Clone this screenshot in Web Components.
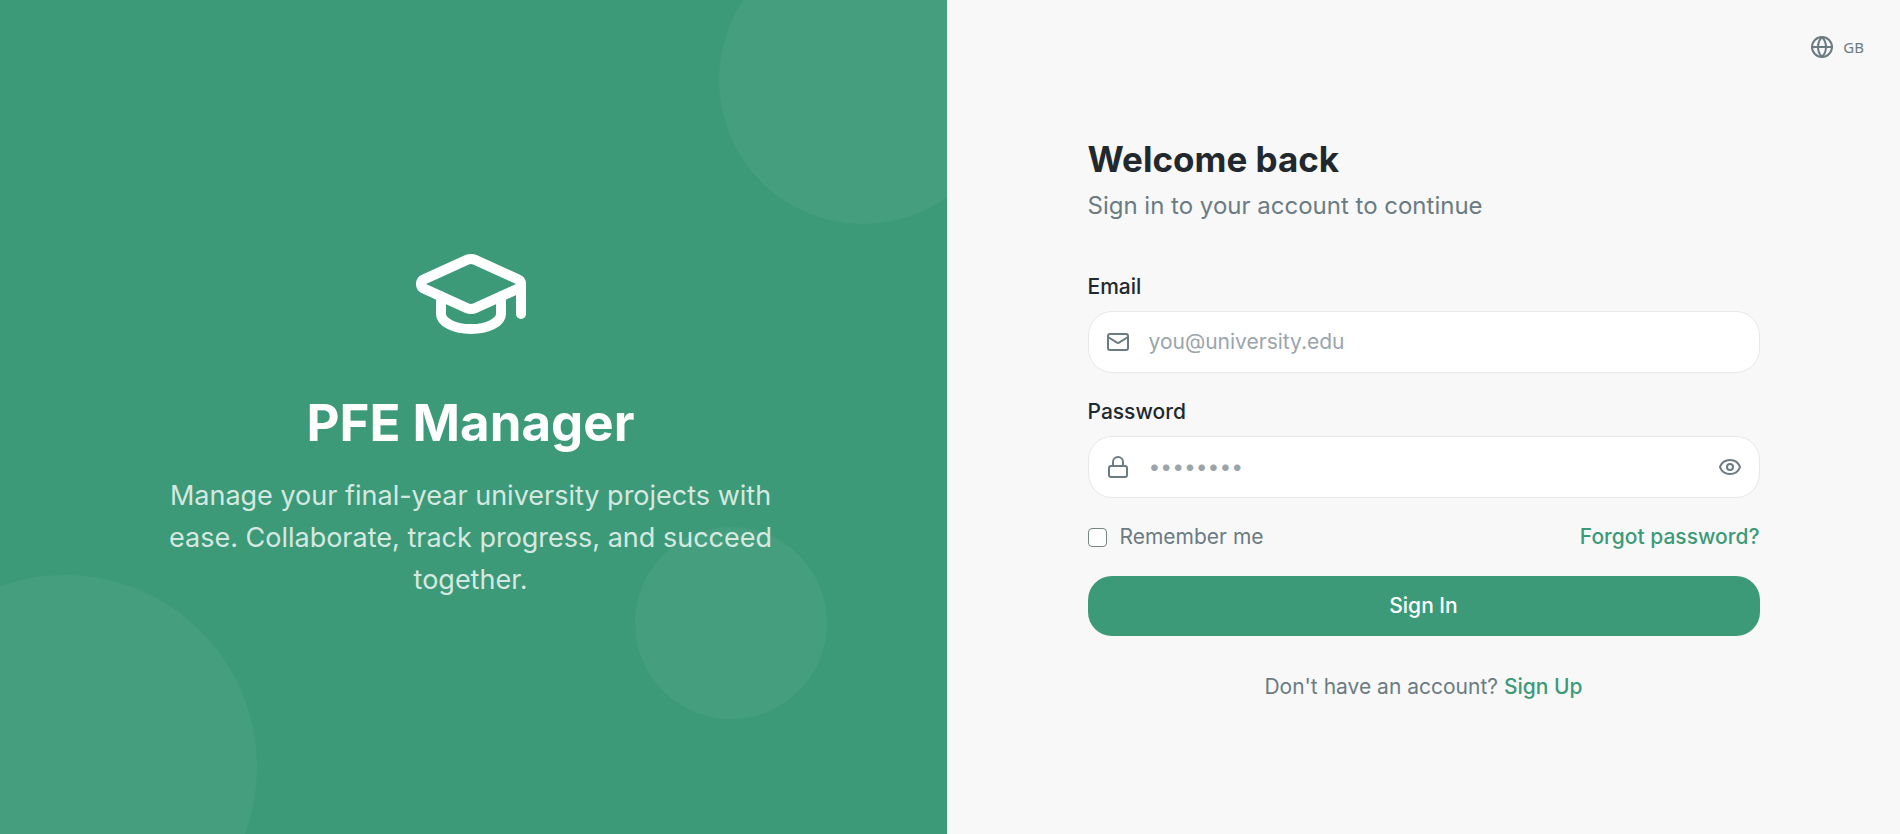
<!DOCTYPE html>
<html lang="en">
<head>
  <meta charset="UTF-8">
  <meta name="viewport" content="width=device-width, initial-scale=1.0">
  <title>PFE Manager</title>
  <style>
    :root {
      --primary: #3c9a78;
      --background: #f8f8f8;
      --foreground: #21292e;
      --muted: #6b7b82;
      --border: #e6e8e9;
    }

    body {
      margin: 0;
      background: var(--background);
      color: var(--foreground);
      font-family: Inter, "Open Sans", sans-serif;
      font-size: 21px;
      line-height: 30px;
    }
  </style>
</head>
<body>
  <login-page></login-page>

  <script>
    const icons = {
      cap: `<path d="M21.42 10.922a1 1 0 0 0-.019-1.838L12.83 5.18a2 2 0 0 0-1.66 0L2.6 9.08a1 1 0 0 0 0 1.832l8.57 3.908a2 2 0 0 0 1.66 0z"/><path d="M22 10v6"/><path d="M6 12.5V16a6 3 0 0 0 12 0v-3.5"/>`,
      mail: `<rect x="2" y="4" width="20" height="16" rx="2"/><path d="m22 7-8.97 5.7a1.94 1.94 0 0 1-2.06 0L2 7"/>`,
      lock: `<rect x="3" y="11" width="18" height="11" rx="2"/><path d="M7 11V7a5 5 0 0 1 10 0v4"/>`,
      eye: `<path d="M2.062 12.348a1 1 0 0 1 0-.696 10.75 10.75 0 0 1 19.876 0 1 1 0 0 1 0 .696 10.75 10.75 0 0 1-19.876 0"/><circle cx="12" cy="12" r="3"/>`,
      globe: `<circle cx="12" cy="12" r="10"/><path d="M12 2a14.5 14.5 0 0 0 0 20 14.5 14.5 0 0 0 0-20"/><path d="M2 12h20"/>`,
    };

    class AppIcon extends HTMLElement {
      constructor() {
        super();
        this.attachShadow({mode: 'open'});
      }

      connectedCallback() {
        this.shadowRoot.innerHTML = `
          <style>
            :host {
              display: block;
              flex: none;
              width: 24px;
              height: 24px;
            }
            svg {
              display: block;
              width: 100%;
              height: 100%;
              fill: none;
              stroke: currentColor;
              stroke-width: 2;
              stroke-linecap: round;
              stroke-linejoin: round;
            }
          </style>
          <svg viewBox="0 0 24 24" aria-hidden="true">${icons[this.getAttribute('name')]}</svg>
        `;
      }
    }

    class BrandPanel extends HTMLElement {
      constructor() {
        super();
        this.attachShadow({mode: 'open'});
      }

      connectedCallback() {
        this.shadowRoot.innerHTML = `
          <style>
            :host {
              position: relative;
              display: flex;
              align-items: center;
              justify-content: center;
              overflow: hidden;
              background: var(--primary);
              color: white;
              text-align: center;
            }
            .circle {
              position: absolute;
              border-radius: 50%;
              background: rgba(255, 255, 255, 0.05);
            }
            .top {
              top: -64px;
              right: -60px;
              width: 288px;
              height: 288px;
            }
            .bottom {
              bottom: -125px;
              left: -121px;
              width: 384px;
              height: 384px;
            }
            .small {
              right: 120px;
              bottom: 115px;
              width: 192px;
              height: 192px;
            }
            .content {
              position: relative;
              display: flex;
              flex-direction: column;
              align-items: center;
              max-width: 640px;
            }
            app-icon {
              width: 120px;
              height: 120px;
              margin-bottom: 39px;
            }
            h1 {
              margin: 0 0 22px;
              font-size: 51px;
              line-height: 60px;
              font-weight: 700;
            }
            p {
              margin: 0;
              color: rgba(255, 255, 255, 0.8);
              font-size: 27px;
              line-height: 42px;
            }
          </style>
          <div class="circle top"></div>
          <div class="circle bottom"></div>
          <div class="circle small"></div>
          <div class="content">
            <app-icon name="cap"></app-icon>
            <h1><slot name="title"></slot></h1>
            <p><slot></slot></p>
          </div>
        `;
      }
    }

    class TextField extends HTMLElement {
      constructor() {
        super();
        this.attachShadow({mode: 'open'});
      }

      connectedCallback() {
        const type = this.getAttribute('type');
        this.shadowRoot.innerHTML = `
          <style>
            :host {
              display: flex;
              flex-direction: column;
              gap: 9px;
            }
            label {
              font-weight: 500;
            }
            .box {
              display: flex;
              align-items: center;
              gap: 19px;
              height: 60px;
              padding: 0 17px;
              border: 1px solid var(--border);
              border-radius: 24px;
              background: white;
              color: var(--muted);
            }
            .box:focus-within {
              border-color: var(--primary);
            }
            input {
              flex: 1;
              min-width: 0;
              padding: 0;
              border: 0;
              outline: 0;
              background: none;
              color: var(--foreground);
              font: inherit;
            }
            input::placeholder {
              color: #9aa5ab;
              opacity: 1;
            }
            button {
              padding: 0;
              border: 0;
              background: none;
              color: inherit;
              cursor: pointer;
            }
          </style>
          <label for="field">${this.getAttribute('label')}</label>
          <div class="box">
            <app-icon name="${this.getAttribute('icon')}"></app-icon>
            <input id="field" type="${type}" placeholder="${this.getAttribute('placeholder')}">
            ${type === 'password' ? `<button type="button" aria-label="Show password"><app-icon name="eye"></app-icon></button>` : ''}
          </div>
        `;

        const toggle = this.shadowRoot.querySelector('button');
        if (toggle) {
          toggle.addEventListener('click', () => {
            const input = this.shadowRoot.querySelector('input');
            input.type = input.type === 'password' ? 'text' : 'password';
          });
        }
      }
    }

    class LanguageButton extends HTMLElement {
      constructor() {
        super();
        this.attachShadow({mode: 'open'});
      }

      connectedCallback() {
        this.shadowRoot.innerHTML = `
          <style>
            :host {
              display: block;
            }
            button {
              display: flex;
              align-items: center;
              gap: 9px;
              padding: 0;
              border: 0;
              background: none;
              color: var(--muted);
              font: 400 15px/26px "Noto Sans", sans-serif;
              cursor: pointer;
            }
          </style>
          <button type="button"><app-icon name="globe"></app-icon><slot></slot></button>
        `;
      }
    }

    class LoginForm extends HTMLElement {
      constructor() {
        super();
        this.attachShadow({mode: 'open'});
      }

      connectedCallback() {
        this.shadowRoot.innerHTML = `
          <style>
            :host {
              display: block;
              width: 100%;
              max-width: 672px;
            }
            h2 {
              margin: 0 0 8px;
              font-size: 35px;
              line-height: 42px;
              font-weight: 700;
            }
            .subtitle {
              margin: 0 0 48px;
              color: var(--muted);
              font-size: 24px;
              line-height: 36px;
            }
            form {
              display: flex;
              flex-direction: column;
              gap: 24px;
            }
            .options {
              display: flex;
              align-items: center;
              justify-content: space-between;
            }
            .remember {
              display: flex;
              align-items: center;
              gap: 13px;
              color: var(--muted);
            }
            .remember input {
              width: 19px;
              height: 19px;
              margin: 0;
              appearance: none;
              border: 1px solid #76867c;
              border-radius: 4px;
              background: white;
            }
            .remember input:checked {
              background: var(--primary);
            }
            a {
              color: var(--primary);
              font-weight: 500;
              text-decoration: none;
            }
            a:hover {
              text-decoration: underline;
            }
            .submit {
              height: 60px;
              border: 0;
              border-radius: 24px;
              background: var(--primary);
              color: white;
              font: inherit;
              font-weight: 500;
              cursor: pointer;
            }
            .signup {
              margin: 36px 0 0;
              color: var(--muted);
              text-align: center;
            }
          </style>
          <h2>Welcome back</h2>
          <p class="subtitle">Sign in to your account to continue</p>
          <form>
            <text-field label="Email" type="email" icon="mail" placeholder="you@university.edu"></text-field>
            <text-field label="Password" type="password" icon="lock" placeholder="••••••••"></text-field>
            <div class="options">
              <label class="remember"><input type="checkbox">Remember me</label>
              <a href="#forgot">Forgot password?</a>
            </div>
            <button class="submit" type="submit">Sign In</button>
          </form>
          <p class="signup">Don't have an account? <a href="#signup">Sign Up</a></p>
        `;

        this.shadowRoot.querySelector('form').addEventListener('submit', (event) => event.preventDefault());
      }
    }

    class LoginPage extends HTMLElement {
      constructor() {
        super();
        this.attachShadow({mode: 'open'});
      }

      connectedCallback() {
        this.shadowRoot.innerHTML = `
          <style>
            :host {
              display: grid;
              grid-template-columns: 1fr 1fr;
              min-height: 100vh;
              margin-left: -6px;
            }
            main {
              position: relative;
              display: flex;
              align-items: center;
              justify-content: center;
              padding: 54px 48px 48px;
            }
            language-button {
              position: absolute;
              top: 34px;
              right: 36px;
            }
          </style>
          <brand-panel>
            <span slot="title">PFE Manager</span>
            Manage your final-year university projects with ease. Collaborate, track progress, and succeed together.
          </brand-panel>
          <main>
            <language-button>GB</language-button>
            <login-form></login-form>
          </main>
        `;
      }
    }

    customElements.define('app-icon', AppIcon);
    customElements.define('brand-panel', BrandPanel);
    customElements.define('text-field', TextField);
    customElements.define('language-button', LanguageButton);
    customElements.define('login-form', LoginForm);
    customElements.define('login-page', LoginPage);
  </script>
</body>
</html>
